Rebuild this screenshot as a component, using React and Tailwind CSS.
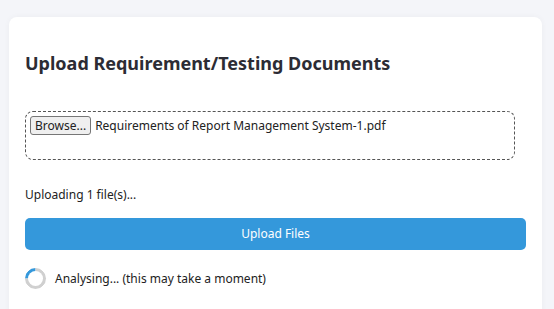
export default function App() {
  return (
    <div className="min-h-[309px] h-[309px] overflow-hidden bg-[#f4f5f9] pt-[17px] pl-[9px] pr-[12px]" style={{ fontFamily: '"Noto Sans", "Open Sans", sans-serif' }}>
      <div className="bg-white rounded-[8px] h-[320px] px-[16px] pt-[34px] shadow-[0_0_6px_rgba(0,0,0,0.04)]">
        <h2 className="text-[18px] font-bold text-[#2c2c34] leading-[24px]">Upload Requirement/Testing Documents</h2>
        <div className="mt-[36px] w-[490px] h-[49px] border border-dashed border-[#555] rounded-[8px] pl-[4px] pt-[4px] flex items-start">
          <div className="flex items-center gap-[4px] text-[12px] text-[#222]">
            <span className="h-[19px] px-[4px] border border-[#767676] rounded-[3px] bg-[#efefef] flex items-center text-[12px] leading-none">Browse...</span>
            <span>Requirements of Report Management System-1.pdf</span>
          </div>
        </div>
        <p className="mt-[26px] text-[12px] text-[#222] leading-[18px]">Uploading 1 file(s)...</p>
        <button className="mt-[14px] w-full h-[32px] rounded-[5px] bg-[#3498db] text-white text-[12px] flex items-center justify-center">Upload Files</button>
        <div className="mt-[18px] flex items-center gap-[9px]">
          <div className="w-[21px] h-[21px] rounded-full border-[3px] border-[#d0d0d0] border-t-[#3498db] -rotate-45"></div>
          <span className="text-[12px] text-[#222]">Analysing... (this may take a moment)</span>
        </div>
      </div>
    </div>
  );
}
